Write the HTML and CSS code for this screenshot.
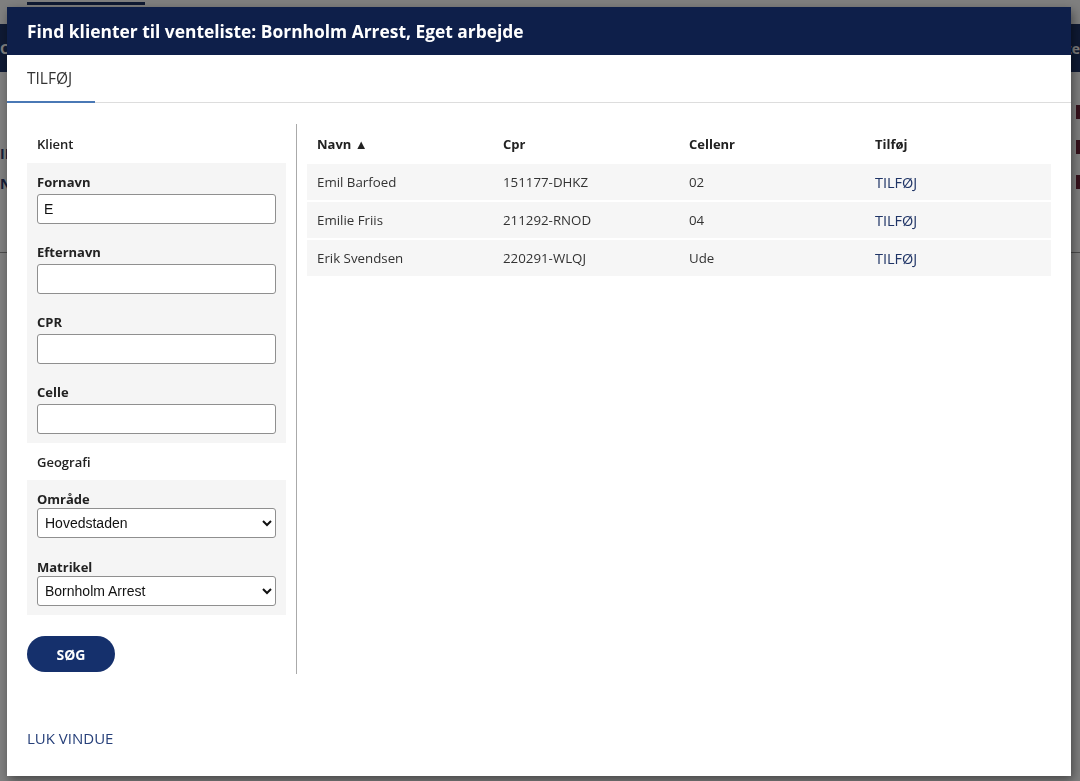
FILE: index.html
```html
<!DOCTYPE html>
<html lang="da">
<head>
<meta charset="utf-8">
<title>Find klienter til venteliste</title>
<link rel="stylesheet" href="styles.css">
</head>
<body>
<div class="page">
  <div class="topnav"><span class="topnav-active"></span></div>
  <div class="pagehead"><span class="ph-left">Oi</span><span class="ph-right">Venteliste</span></div>
  <div class="pagebody">
    <div class="pb-col pb-leftcol">
      <span class="pb-text">IF</span>
      <span class="pb-text">NS</span>
    </div>
    <div class="pb-col pb-rightcol">
      <span class="pb-mark"></span>
      <span class="pb-mark"></span>
      <span class="pb-mark"></span>
    </div>
  </div>
  <div class="pb-line"></div>
</div>

<div class="overlay">
  <div class="modal">
    <div class="modal-head">Find klienter til venteliste: Bornholm Arrest, Eget arbejde</div>
    <div class="tabs"><div class="tab active">TILFØJ</div></div>
    <div class="modal-body">
      <div class="filters">
        <div class="section-title">Klient</div>
        <div class="box">
          <div class="field">
            <label class="lbl">Fornavn</label>
            <input class="inp" type="text" value="E">
          </div>
          <div class="field">
            <label class="lbl">Efternavn</label>
            <input class="inp" type="text">
          </div>
          <div class="field">
            <label class="lbl">CPR</label>
            <input class="inp" type="text">
          </div>
          <div class="field">
            <label class="lbl">Celle</label>
            <input class="inp" type="text">
          </div>
        </div>
        <div class="section-title geo">Geografi</div>
        <div class="box selbox">
          <div class="field sel">
            <label class="lbl">Område</label>
            <select class="inp"><option>Hovedstaden</option></select>
          </div>
          <div class="field sel">
            <label class="lbl">Matrikel</label>
            <select class="inp"><option>Bornholm Arrest</option></select>
          </div>
        </div>
        <button class="btn">SØG</button>
      </div>
      <div class="results">
        <table class="tbl">
          <thead>
            <tr><th>Navn ▲</th><th>Cpr</th><th>Cellenr</th><th>Tilføj</th></tr>
          </thead>
          <tbody>
            <tr><td>Emil Barfoed</td><td>151177-DHKZ</td><td>02</td><td><a class="link">TILFØJ</a></td></tr>
            <tr><td>Emilie Friis</td><td>211292-RNOD</td><td>04</td><td><a class="link">TILFØJ</a></td></tr>
            <tr><td>Erik Svendsen</td><td>220291-WLQJ</td><td>Ude</td><td><a class="link">TILFØJ</a></td></tr>
          </tbody>
        </table>
      </div>
    </div>
    <div class="modal-foot"><a class="link close">LUK VINDUE</a></div>
  </div>
</div>
</body>
</html>
```

FILE: styles.css
```css
* { box-sizing: border-box; }
html, body { margin: 0; padding: 0; }
body {
  width: 1080px;
  height: 781px;
  overflow: hidden;
  font-family: "Open Sans", "Noto Sans", sans-serif;
  background: #fff;
}

/* background page (dimmed behind the dialog) */
.page { height: 781px; }
.topnav { height: 22px; padding-left: 27px; background: #fff; }
.topnav-active { display: block; width: 118px; height: 3px; margin-top: 2px; background: #1e3366; }
.pagehead {
  height: 48px;
  background: #1e3468;
  color: #fff;
  display: flex;
  justify-content: space-between;
  align-items: center;
  font-size: 14px;
  font-weight: bold;
}
.pagebody {
  height: 180px;
  display: flex;
  justify-content: space-between;
}
.pb-col { display: flex; flex-direction: column; }
.pb-leftcol { padding-top: 72px; gap: 10px; }
.pb-text { height: 20px; line-height: 20px; color: #2a3b6e; font-size: 14px; font-weight: bold; }
.pb-rightcol { padding-top: 33px; gap: 21px; }
.pb-mark { width: 4px; height: 14px; background: #6a2035; }
.pb-line { height: 1px; background: #999; }

/* overlay + modal */
.overlay {
  position: fixed;
  inset: 0;
  background: rgba(0, 0, 0, 0.5);
}
.modal {
  position: absolute;
  top: 7px;
  left: 7px;
  width: 1064px;
  height: 769px;
  background: #fff;
  box-shadow: 2px 4px 10px rgba(0, 0, 0, 0.45);
  display: flex;
  flex-direction: column;
}
.modal-head {
  height: 48px;
  background: #0e1f4a;
  color: #fff;
  font-size: 17.4px;
  font-weight: bold;
  padding-left: 20px;
  display: flex;
  align-items: center;
}
.tabs {
  height: 48px;
  border-bottom: 1px solid #ddd;
  display: flex;
}
.tab {
  padding: 0 20px 1px 20px;
  font-size: 15.5px;
  color: #333;
  display: flex;
  align-items: center;
}
.tab.active { border-bottom: 2px solid #4a78b5; margin-bottom: -1px; width: 88px; }

.modal-body {
  display: flex;
  padding: 21px 20px 0 20px;
}
.filters {
  width: 270px;
  padding-right: 10px;
  border-right: 1px solid #aaa;
  height: 550px;
}
.section-title {
  height: 39px;
  padding-left: 10px;
  display: flex;
  align-items: center;
  font-size: 13px;
  font-weight: 600;
  color: #222;
}
.section-title.geo { height: 37px; }
.box {
  background: #f5f5f5;
  padding: 10px 10px 9px 10px;
  display: flex;
  flex-direction: column;
  gap: 19px;
}
.box.selbox { gap: 20px; }
.field { display: flex; flex-direction: column; }
.lbl {
  height: 18px;
  line-height: 18px;
  font-size: 13px;
  font-weight: bold;
  color: #222;
  margin-bottom: 3px;
}
.field.sel .lbl { margin-bottom: 0; }
.inp {
  height: 30px;
  width: 100%;
  border: 1px solid #8f8f8f;
  border-radius: 3px;
  background: #fff;
  font-family: "Liberation Sans", Arial, sans-serif;
  font-size: 14px;
  color: #111;
  padding: 0 6px;
  margin: 0;
}
select.inp { padding: 0 3px; }
.btn {
  margin-top: 21px;
  width: 88px;
  height: 36px;
  border: none;
  border-radius: 18px;
  background: #15306c;
  color: #fff;
  font-family: "Open Sans", sans-serif;
  font-weight: bold;
  font-size: 14px;
  padding: 0;
}

.results { flex: 1; padding-left: 10px; }
.tbl {
  width: 744px;
  border-collapse: separate;
  border-spacing: 0 2px;
  table-layout: fixed;
  margin-top: -2px;
}
.tbl th {
  height: 38px;
  padding: 2px 10px 0 10px;
  text-align: left;
  font-size: 13px;
  font-weight: bold;
  color: #222;
}
.tbl td {
  height: 36px;
  background: #f6f6f6;
  font-size: 13.3px;
  color: #333;
  padding: 0 10px;
}
.tbl td .link { font-size: 14.5px; }
.link { color: #1f3466; text-decoration: none; }
.modal-foot {
  margin-top: auto;
  padding: 0 20px 28px 20px;
  font-size: 15px;
}
.close { color: #27407a; }
```
